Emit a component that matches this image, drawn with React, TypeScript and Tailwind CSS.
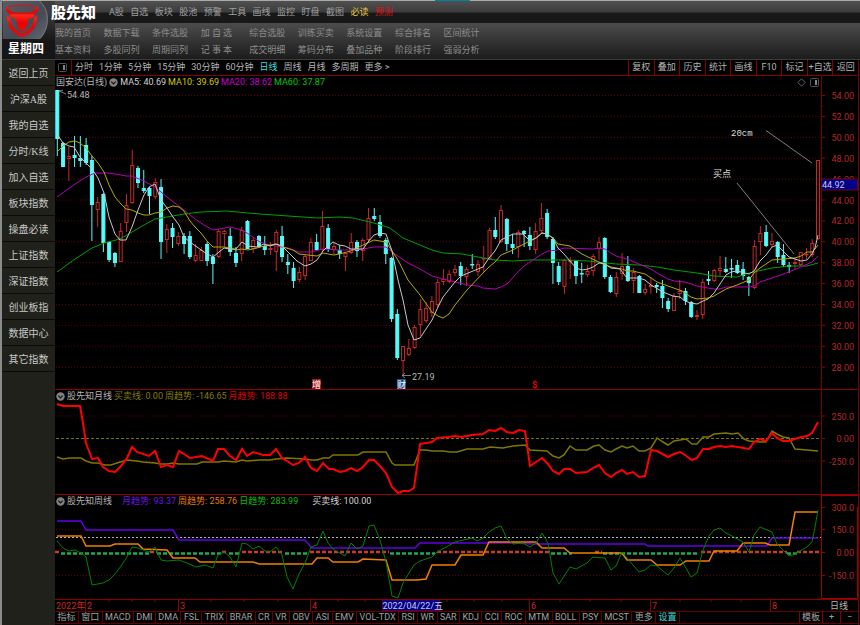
import { useState } from 'react';
import clsx from 'clsx';

type Candle = [high: number, top: number, bottom: number, low: number, up: 0 | 1];

interface Series {
  color: string;
  width: number;
  points: string;
}

interface Legend {
  text: string;
  className: string;
}

const TOP_MENU = ['A股', '自选', '板块', '股池', '预警', '工具', '画线', '监控', '盯盘', '截图', '必读', '预测'];

const SUB_MENU = [
  '我的首页', '数据下载', '条件选股', '加 自 选', '综合选股', '训练买卖', '系统设置', '综合排名', '区间统计',
  '基本资料', '多股同列', '周期同列', '记 事 本', '成交明细', '筹码分布', '叠加品种', '阶段排行', '强弱分析',
];

const SIDE_MENU = [
  '返回上页', '沪深A股', '我的自选', '分时/K线', '加入自选', '板块指数',
  '操盘必读', '上证指数', '深证指数', '创业板指', '数据中心', '其它指数',
];

const PERIODS = ['分时', '1分钟', '5分钟', '15分钟', '30分钟', '60分钟', '日线', '周线', '月线', '多周期', '更多 >'];

const TOOLS = ['复权', '叠加', '历史', '统计', '画线', 'F10', '标记', '+自选', '返回'];

const INDICATORS = [
  '指标', '窗口', 'MACD', 'DMI', 'DMA', 'FSL', 'TRIX', 'BRAR', 'CR', 'VR', 'OBV', 'ASI', 'EMV',
  'VOL-TDX', 'RSI', 'WR', 'SAR', 'KDJ', 'CCI', 'ROC', 'MTM', 'BOLL', 'PSY', 'MCST', '更多', '设置',
];

const CANDLES: Candle[] = [
  [90, 90, 139, 156, 0], [142, 143, 167, 167, 0], [147, 156, 159, 181, 1], [136, 155, 158, 167, 0],
  [136, 158, 161, 167, 0], [138, 145, 163, 165, 0], [156, 160, 205, 241, 0], [197, 202, 210, 227, 1],
  [193, 194, 243, 252, 0], [241, 242, 260, 262, 0], [252, 253, 263, 267, 0], [223, 231, 262, 262, 1],
  [194, 205, 223, 232, 1], [150, 165, 203, 204, 1], [166, 168, 183, 188, 0], [170, 188, 191, 193, 0],
  [187, 188, 196, 214, 0], [178, 182, 197, 199, 1], [179, 187, 242, 259, 0], [224, 229, 240, 253, 1],
  [223, 228, 237, 248, 0], [232, 236, 244, 246, 1], [233, 236, 244, 254, 0], [231, 236, 257, 259, 0],
  [244, 255, 261, 262, 1], [247, 250, 261, 261, 1], [242, 244, 261, 266, 0], [254, 257, 264, 284, 0],
  [229, 231, 257, 258, 1], [230, 231, 234, 247, 1], [228, 236, 252, 256, 0], [247, 253, 263, 267, 0],
  [227, 230, 254, 261, 1], [220, 221, 249, 249, 0], [237, 240, 249, 253, 1], [235, 236, 247, 248, 0],
  [236, 246, 250, 255, 0], [242, 248, 250, 255, 1], [230, 232, 252, 271, 1], [226, 236, 257, 262, 0],
  [254, 262, 265, 274, 0], [262, 268, 281, 288, 0], [267, 272, 280, 282, 1], [255, 256, 276, 280, 1],
  [238, 242, 261, 261, 1], [234, 242, 250, 251, 0], [211, 226, 250, 252, 1], [224, 228, 249, 252, 0],
  [243, 246, 250, 254, 1], [245, 250, 254, 259, 0], [252, 253, 257, 271, 1], [233, 242, 253, 254, 1],
  [240, 242, 251, 257, 0], [238, 240, 251, 261, 1], [208, 218, 240, 242, 1], [208, 216, 219, 221, 0],
  [215, 222, 236, 238, 0], [238, 240, 254, 264, 0], [257, 258, 319, 322, 0], [309, 314, 358, 360, 0],
  [346, 346, 361, 375, 1], [339, 348, 355, 356, 1], [325, 327, 348, 349, 1], [299, 309, 325, 336, 1],
  [302, 308, 321, 323, 1], [296, 301, 313, 317, 1], [279, 282, 305, 307, 1], [269, 279, 282, 285, 1],
  [270, 274, 282, 283, 1], [265, 269, 273, 276, 1], [262, 266, 276, 285, 0], [267, 269, 277, 286, 1],
  [254, 264, 265, 269, 0], [260, 264, 272, 276, 1], [246, 258, 259, 272, 1], [228, 230, 259, 260, 1],
  [217, 230, 237, 239, 0], [205, 210, 242, 243, 1], [218, 219, 244, 251, 0], [234, 244, 248, 254, 0],
  [230, 232, 247, 258, 1], [230, 231, 234, 247, 0], [227, 235, 246, 250, 0], [223, 231, 250, 254, 1],
  [203, 218, 231, 233, 1], [209, 213, 237, 239, 0], [237, 239, 263, 284, 0], [262, 266, 282, 285, 0],
  [259, 260, 287, 294, 1], [257, 260, 262, 279, 1], [261, 261, 276, 284, 0], [263, 273, 274, 283, 0],
  [265, 271, 275, 277, 1], [254, 256, 271, 276, 1], [237, 242, 249, 260, 1], [237, 238, 277, 279, 0],
  [275, 277, 292, 293, 0], [272, 277, 294, 297, 1], [253, 266, 274, 280, 1], [256, 266, 281, 282, 0],
  [268, 272, 281, 293, 1], [275, 276, 293, 293, 0], [284, 289, 293, 295, 1], [277, 285, 287, 294, 1],
  [283, 285, 287, 293, 0], [280, 286, 298, 308, 0], [298, 301, 309, 312, 0], [293, 296, 311, 311, 1],
  [280, 291, 294, 299, 1], [288, 291, 301, 305, 0], [301, 302, 317, 318, 0], [310, 315, 317, 320, 1],
  [279, 282, 315, 319, 1], [271, 279, 281, 285, 0], [269, 270, 281, 282, 1], [256, 268, 271, 276, 1],
  [257, 269, 272, 273, 0], [259, 268, 269, 278, 0], [260, 265, 273, 274, 0], [262, 269, 276, 280, 0],
  [276, 277, 283, 296, 0], [240, 246, 288, 289, 1], [226, 233, 242, 255, 1], [225, 232, 246, 247, 0],
  [233, 241, 245, 247, 1], [241, 242, 257, 263, 0], [244, 255, 265, 267, 0], [262, 265, 267, 273, 0],
  [257, 262, 264, 269, 1], [252, 252, 265, 266, 1], [248, 254, 255, 259, 1], [239, 243, 255, 257, 1],
  [160, 160, 239, 240, 1],
];

const MA_LINES: Series[] = [
  {
    color: '#00a000',
    width: 1,
    points:
      '57,272 75,259 92,248 104,243 120,239 132,232 144,225 155,219 167,217 184,214 201,212 227,211 248,213 260,214 317,218 340,217 353,218 374,223 390,228 403,238 420,245 432,250 443,253 462,254 478,257 495,260 513,261 530,260 567,260 588,261 616,264 639,265 657,267 674,270 697,273 714,276 737,277 749,273 772,268 789,266 807,266 818,263',
  },
  {
    color: '#b400b4',
    width: 1,
    points:
      '57,197 75,184 86,177 95,173 109,173 115,174 121,175 126,176 132,176 144,181 155,187 167,197 184,210 195,219 204,225 213,230 219,229 230,227 242,230 247,233 260,242 270,245 276,246 288,248 299,252 311,252 323,249 339,250 351,250 363,249 374,247 386,247 392,252 408,263 420,269 432,276 443,279 460,283 467,285 478,286 483,288 495,289 501,287 507,284 518,272 524,266 536,258 542,254 548,251 558,250 564,248 593,249 599,248 605,249 611,253 616,256 627,259 639,264 651,269 657,273 668,279 674,281 685,282 697,286 708,288 714,289 720,289 726,287 749,287 754,286 760,282 772,278 789,272 801,267 812,262 818,256',
  },
  {
    color: '#b4aa00',
    width: 1,
    points:
      '57,152 63,146 69,142 75,141 80,143 86,148 92,156 98,163 104,172 109,185 115,197 121,204 126,209 132,210 138,213 144,215 149,215 155,213 161,212 167,208 173,206 179,207 184,211 190,221 195,227 201,233 207,241 213,247 224,247 230,248 236,250 242,249 248,250 257,248 264,246 276,244 283,247 293,250 299,254 317,256 323,253 334,255 339,254 351,251 363,245 374,240 386,242 392,251 398,260 408,280 420,295 432,312 438,316 443,318 449,314 455,305 467,290 483,273 489,267 495,262 501,255 513,250 518,247 530,241 536,238 542,233 547,234 553,238 558,244 570,246 582,254 588,257 599,262 611,267 622,269 627,271 633,271 645,274 657,282 668,286 682,291 691,297 697,299 708,298 714,296 726,289 737,285 749,280 754,273 760,268 772,260 783,259 795,258 801,256 807,252 812,252 815,249 818,245',
  },
  {
    color: '#c8c8c8',
    width: 1,
    points:
      '57,134 63,143 69,146 74,147 80,157 92,169 98,178 104,193 109,217 115,234 120,240 126,240 132,227 138,210 144,195 149,187 155,184 161,200 167,208 173,217 179,225 184,237 190,242 197,247 204,252 213,257 219,252 224,248 230,249 236,249 242,242 248,246 257,247 264,244 270,246 276,244 282,246 288,252 297,261 305,266 311,264 317,260 323,251 327,247 333,242 339,245 345,246 351,249 363,249 368,242 374,235 380,233 386,234 392,251 398,280 403,300 408,325 414,340 420,338 432,320 438,307 443,297 455,282 461,276 473,271 483,267 489,258 495,251 501,240 507,237 513,234 523,234 530,241 536,238 542,233 547,234 553,238 558,248 564,254 570,261 576,268 582,270 588,269 593,267 599,263 605,264 611,268 620,269 627,278 639,278 645,280 651,285 663,292 673,296 680,297 685,301 691,303 697,304 703,301 708,299 714,293 726,275 731,272 737,271 749,274 754,271 760,261 766,255 772,247 777,245 783,251 789,257 795,259 801,261 807,260 812,254 815,248 818,235',
  },
];

const MONTH_LINES: Series[] = [
  {
    color: '#7d7800',
    width: 1.5,
    points:
      '57,457 63,459 70,458 81,458 86,461 92,463 98,463 105,465 111,465 117,463 127,460 137,461 143,462 155,463 161,464 167,464 173,463 179,464 197,464 202,462 218,462 224,461 236,462 242,460 247,461 259,460 270,460 276,459 287,458 305,459 312,460 317,460 323,458 329,458 333,455 358,455 363,452 386,452 392,463 395,465 414,465 420,450 426,450 432,451 443,451 450,452 457,452 467,449 483,449 490,447 503,448 513,446 525,445 530,450 547,451 553,456 559,458 564,455 570,446 576,450 587,450 594,446 599,445 605,450 611,452 616,449 622,446 627,448 633,446 639,451 645,451 651,448 657,438 663,442 668,445 674,441 680,440 686,439 692,444 697,444 703,437 709,437 714,434 726,433 732,434 738,433 744,439 749,441 760,442 766,442 772,431 777,434 783,437 789,438 795,449 807,450 818,451',
  },
  {
    color: '#ff0000',
    width: 2,
    points:
      '57,404 63,406 80,406 82,417 86,443 92,459 98,458 103,467 109,471 115,472 121,466 127,458 132,447 137,452 149,456 155,451 161,467 167,465 173,467 179,451 184,454 190,458 202,456 213,461 218,449 224,449 230,456 236,460 242,449 247,456 253,452 263,455 270,455 276,449 282,458 287,461 293,465 299,463 305,457 311,468 317,471 323,463 329,469 333,469 340,472 345,471 351,468 357,471 363,467 369,460 374,460 380,466 386,473 392,487 398,493 403,491 409,491 414,488 417,467 420,444 426,443 432,442 437,438 448,437 455,436 461,437 472,435 483,434 489,430 495,431 501,428 507,432 513,433 519,430 525,431 530,466 536,462 542,458 548,464 553,471 559,474 564,469 570,469 576,473 587,472 593,468 599,465 605,473 611,477 616,473 622,470 627,474 633,472 639,477 645,476 651,450 657,451 668,457 674,454 680,452 685,455 692,460 697,458 703,449 709,449 714,447 720,446 726,447 732,446 749,449 754,442 760,439 766,441 772,433 777,438 783,441 789,441 801,437 807,436 812,433 818,422',
  },
];

const WEEK_LINES: Series[] = [
  {
    color: '#6400e6',
    width: 1.5,
    points:
      '57,521 81,521 86,530 173,530 179,540 305,540 312,548 415,548 420,543 517,543 533,544 645,544 648,546 767,546 772,538 818,538',
  },
  {
    color: '#f08000',
    width: 1.5,
    points:
      '57,536 81,536 86,546 110,546 115,544 138,544 143,549 167,550 173,558 195,558 200,562 253,562 259,564 312,564 317,558 328,558 333,562 358,562 363,559 386,560 392,580 417,580 426,579 432,565 455,565 461,555 483,555 489,542 536,542 542,548 564,548 570,553 622,553 627,560 651,560 657,565 680,565 686,561 709,561 714,551 737,551 743,543 765,543 770,545 789,545 795,512 818,512',
  },
  {
    color: '#008200',
    width: 1,
    points:
      '57,541 63,548 69,551 75,550 81,553 86,557 92,585 103,583 109,580 115,574 121,566 127,557 132,547 138,548 149,552 155,547 161,560 167,561 179,560 187,563 196,567 205,565 213,568 218,555 224,552 230,557 236,567 242,543 247,544 253,549 259,546 265,551 270,552 276,547 282,555 287,577 293,589 299,574 305,563 311,547 317,545 323,531 328,543 333,549 345,556 351,543 357,549 363,546 369,526 374,525 380,540 386,562 392,596 398,598 403,583 409,573 414,565 420,561 432,557 437,552 448,546 455,542 472,538 477,541 483,538 489,532 495,528 501,526 507,539 513,544 523,543 530,547 536,543 542,533 548,543 553,573 559,584 570,567 576,569 587,563 593,557 605,558 611,570 616,566 622,552 627,558 633,565 639,572 645,570 651,565 657,566 668,575 674,568 680,558 686,568 691,577 697,573 703,550 709,536 714,530 720,528 726,533 732,536 743,542 749,552 754,535 760,527 772,532 777,544 789,556 795,554 807,547 812,542 815,527 818,510',
  },
];

// x ranges of the dashed zero line, long side in red and short side in green
const ZERO_RED = [[55, 59], [150, 157], [222, 228], [242, 284], [310, 389], [437, 549], [595, 602], [701, 787], [797, 820]];
const ZERO_GREEN = [[61, 150], [157, 221], [229, 240], [285, 309], [390, 435], [551, 572], [603, 699], [787, 797]];

const PRICES = Array.from({ length: 14 }, (_, i) => ({
  label: (54 - i * 2).toFixed(2),
  y: 95.5 + i * 20.9,
}));

const MONTHS = [
  { x: 86, label: '2' },
  { x: 179, label: '3' },
  { x: 311, label: '4' },
  { x: 530, label: '6' },
  { x: 651, label: '7' },
  { x: 771, label: '8' },
];

const MINOR_TICKS = [109, 132, 155, 211, 244, 278, 338, 365, 447, 474, 502, 560, 590, 621, 680, 711, 741];

const FONT = "font-['Roboto','Noto_Sans_CJK_SC',sans-serif]";

function Lines({ series }: { series: Series[] }) {
  return (
    <>
      {series.map((s) => (
        <polyline key={s.color} points={s.points} fill="none" stroke={s.color} strokeWidth={s.width} />
      ))}
    </>
  );
}

function GridLine({ y, stroke = '#640000', dash = '1 2' }: { y: number; stroke?: string; dash?: string }) {
  return <line x1="56" x2="821" y1={y} y2={y} stroke={stroke} strokeDasharray={dash} />;
}

function AxisLabel({ y, children }: { y: number; children: string }) {
  return (
    <>
      <line x1="821" x2="825" y1={y} y2={y} stroke="#960000" />
      <text x="854" y={y + 3.5} fill="#b42828" fontSize="9" textAnchor="end">
        {children}
      </text>
    </>
  );
}

function CollapseIcon() {
  return (
    <svg viewBox="0 0 9 9" className="h-[9px] w-[9px] shrink-0">
      <circle cx="4.5" cy="4.5" r="4.2" fill="#828282" />
      <path d="M2.3 3.6 4.5 5.8 6.7 3.6" fill="none" stroke="#141414" strokeWidth="1.2" />
    </svg>
  );
}

function PaneIcon() {
  return (
    <svg viewBox="0 0 9 9" className="h-[9px] w-[9px] shrink-0">
      <rect x="0.5" y="0.5" width="8" height="8" rx="1" fill="none" stroke="#505050" />
      <rect x="5" y="2" width="2" height="5" fill="#828282" />
    </svg>
  );
}

function BullLogo() {
  return (
    <svg viewBox="0 0 48 39" className="h-[39px] w-[48px]" role="img" aria-label="股先知">
      <defs>
        <linearGradient id="plate" x1="0" y1="0" x2="1" y2="1">
          <stop offset="0" stopColor="#5a5d64" />
          <stop offset="0.6" stopColor="#464a54" />
          <stop offset="1" stopColor="#646973" />
        </linearGradient>
        <linearGradient id="bull" x1="0" y1="0" x2="0" y2="1">
          <stop offset="0" stopColor="#ff2a1e" />
          <stop offset="0.5" stopColor="#f00000" />
          <stop offset="1" stopColor="#d21414" />
        </linearGradient>
      </defs>
      <path d="M0 0H38C44 6 46 12 46 19C46 27 43 34 38 39H0Z" fill="url(#plate)" />
      <path d="M38 0C44 6 46 12 46 19C46 27 43 34 38 39" fill="none" stroke="#84888f" strokeWidth="0.8" />
      <path d="M6 6.5C12 3.8 28 3.8 34 6.500" fill="none" stroke="#c81e1e" strokeWidth="1.300" />
      <path
        d="M4.500 4C2 9 5 14 11 15.500H29C35 14 38 9 35.500 4C35.300 8 32 10.500 27 11.800H13C8 10.500 4.700 8 4.500 4Z"
        fill="url(#bull)"
      />
      <path
        d="M9 13.500H31L33 15.500 28.500 18 26 18.500 25.500 24 22.500 31H17.500L14.500 24 14 18.500 11.500 18 7 15.500Z"
        fill="url(#bull)"
      />
      <path
        d="M4.500 14.500C4.500 24 8 32 20 37.500C32 32 35.500 24 35.500 14.500L32 17.500C31.500 24.500 29 29.500 20 33.800C11 29.500 8.500 24.500 8 17.500Z"
        fill="url(#bull)"
      />
    </svg>
  );
}

function PanelHeader({
  title,
  legends,
  iconFirst,
  active,
  icons,
}: {
  title: string;
  legends: Legend[];
  iconFirst?: boolean;
  active?: boolean;
  icons?: boolean;
}) {
  return (
    <div className="flex h-3 items-stretch leading-3">
      <div className="flex min-w-0 flex-1 items-center gap-[2px] overflow-hidden px-px whitespace-nowrap">
        {iconFirst && <CollapseIcon />}
        <h2 className="text-[#b4b4b4]">{title}</h2>
        {!iconFirst && <CollapseIcon />}
        {legends.map((l) => (
          <span key={l.text} className={l.className}>
            {l.text}
          </span>
        ))}
        {icons && (
          <div className="mr-px ml-auto flex items-center gap-1">
            <svg viewBox="0 0 9 9" className="h-[9px] w-[9px]">
              <path d="M4.500 0.800 8.200 4.500 4.500 8.200 0.800 4.500Z" fill="none" stroke="#646464" />
            </svg>
            <PaneIcon />
          </div>
        )}
      </div>
      <div
        className={clsx(
          'w-[37px] shrink-0 border-l',
          active ? 'border-t border-[#a00000]' : 'border-[#780000]',
        )}
      />
    </div>
  );
}

function PriceChart() {
  return (
    <svg viewBox="55 88 803 302" className="h-auto w-full" fontSize="9">
      {PRICES.map((p) => (
        <g key={p.label}>
          <GridLine y={p.y} />
          <AxisLabel y={p.y}>{p.label}</AxisLabel>
          <line x1="821" x2="823" y1={p.y + 10.5} y2={p.y + 10.5} stroke="#780000" />
        </g>
      ))}
      <line x1="821.5" x2="821.5" y1="88" y2="390" stroke="#780000" />
      <line x1="55" x2="858" y1="389.5" y2="389.5" stroke="#8c0000" />

      {CANDLES.map(([high, top, bottom, low, up], i) => {
        const x = 57.3 + i * 5.763;
        const color = up ? '#c82828' : '#54fcfc';
        return (
          <g key={i} stroke={color}>
            <line x1={x} x2={x} y1={high} y2={top} />
            <line x1={x} x2={x} y1={bottom} y2={low} />
            <rect
              x={x - 1.5}
              y={top + 0.5}
              width="3"
              height={Math.max(bottom - top - 1, 0.5)}
              fill={up ? '#000000' : color}
            />
          </g>
        );
      })}
      <Lines series={MA_LINES} />

      <g stroke="#a0a0a0" strokeWidth="0.8" fill="none">
        <path d="M59 91 66 94M59 91 63 90.500" />
        <path d="M402 375.500H411M405 373 402 375.500 405 378" />
        <path d="M766 130.500 812 163M737 183 794 254" />
      </g>
      <g fill="#b4b4b4">
        <text x="67" y="97.500">54.48</text>
        <text x="412" y="379.500">27.19</text>
      </g>
      <g fill="#dcdcdc">
        <text x="731" y="136" fontFamily="'Liberation Mono',monospace">20cm</text>
        <text x="713" y="177" fontFamily="'Noto Sans CJK SC',sans-serif">买点</text>
      </g>

      <rect x="312" y="379" width="9" height="10" fill="#a01414" />
      <text x="312" y="387.500" fill="#ffffff">增</text>
      <rect x="397" y="379" width="9" height="10" fill="#1e5096" />
      <text x="397" y="387.500" fill="#ffffff">财</text>
      <text x="532" y="388" fill="#f00000" fontWeight="700">$</text>

      <rect x="821.500" y="179" width="36" height="11" fill="#00008c" stroke="#780000" />
      <text x="822" y="187.500" fill="#c8c8dc">44.92</text>
    </svg>
  );
}

function MonthChart() {
  return (
    <svg viewBox="55 402 803 93" className="h-auto w-full">
      <GridLine y={416} />
      <GridLine y={438.5} stroke="#787800" dash="3 2" />
      <GridLine y={461} />
      <AxisLabel y={416}>250.0</AxisLabel>
      <AxisLabel y={438.5}>0.00</AxisLabel>
      <AxisLabel y={461}>-250.0</AxisLabel>
      <line x1="821.5" x2="821.5" y1="402" y2="495" stroke="#780000" />
      <line x1="55" x2="858" y1="494.5" y2="494.5" stroke="#8c0000" />
      <Lines series={MONTH_LINES} />
    </svg>
  );
}

function WeekChart() {
  return (
    <svg viewBox="55 507 803 93" className="h-auto w-full overflow-visible">
      <GridLine y={529.5} />
      <GridLine y={537.5} stroke="#b4b4b4" dash="2 2" />
      <GridLine y={575.5} />
      <AxisLabel y={507.5}>300.0</AxisLabel>
      <AxisLabel y={529.5}>150.0</AxisLabel>
      <AxisLabel y={552.5}>0.00</AxisLabel>
      <AxisLabel y={575.5}>-150.0</AxisLabel>
      {ZERO_RED.map(([a, b]) => (
        <line key={a} x1={a} x2={b} y1="552" y2="552" stroke="#c83c28" strokeWidth="2.500" strokeDasharray="4 2" />
      ))}
      {ZERO_GREEN.map(([a, b]) => (
        <line key={a} x1={a} x2={b} y1="553.500" y2="553.500" stroke="#1eaa5a" strokeWidth="2.500" strokeDasharray="4 2" />
      ))}
      <Lines series={WEEK_LINES} />
      <path d="M821.500 507V598.500H857.500V507" fill="none" stroke="#a00000" />
      <line x1="55" x2="858" y1="599.5" y2="599.5" stroke="#8c0000" />
    </svg>
  );
}

function DateAxis() {
  return (
    <svg viewBox="55 600 803 11" className="h-auto w-full" fontSize="9" fill="#c82828">
      {MINOR_TICKS.map((x) => (
        <line key={x} x1={x} x2={x} y1="600" y2="602" stroke="#8c0000" />
      ))}
      <text x="56" y="608.500">2022年</text>
      {MONTHS.map((m) => (
        <g key={m.x}>
          <line x1={m.x - 0.5} x2={m.x - 0.5} y1="600" y2="611" stroke="#8c0000" />
          <text x={m.x + 1} y="608.500">{m.label}</text>
        </g>
      ))}
      <rect x="382.500" y="600" width="57" height="10.500" fill="#00008c" stroke="#500050" />
      <text x="382.500" y="608.500" fill="#c8c8dc">2022/04/22/五</text>
      <text x="830" y="608.500" fill="#b4b4b4">日线</text>
    </svg>
  );
}

function Header() {
  return (
    <header className="flex h-[59px] border-b border-[#3c3c3c] bg-linear-to-b from-[#4b4b4b] from-40% to-[#1c1c1c]">
      <div className="flex w-[53px] shrink-0 flex-col bg-linear-to-b from-[#3c3c3c] from-20% to-[#161616] to-70%">
        <BullLogo />
        <div className="pl-[6px] text-[12px] leading-5 font-bold whitespace-nowrap text-white">星期四</div>
      </div>
      <div className="flex min-w-0 flex-1 flex-col">
        <div className="flex h-[22px] items-center bg-linear-to-b from-[#505050] from-0% via-[#3c3c3c] via-50% to-[#181818] to-55% pt-[2px]">
          <h1 className="w-[54px] shrink-0 -indent-1 text-[15px] leading-5 font-black whitespace-nowrap text-white">
            股先知
          </h1>
          <nav className="flex w-[284px] justify-between whitespace-nowrap">
            {TOP_MENU.map((item) => (
              <a
                key={item}
                href="#"
                className={clsx(
                  item === '必读' && 'text-[#e6c83c]',
                  item === '预测' && 'text-[#dc1414]',
                  item !== '必读' && item !== '预测' && 'text-[#a0a0a0]',
                )}
              >
                {item}
              </a>
            ))}
          </nav>
        </div>
        <nav className="grid w-[437px] grid-cols-9 whitespace-nowrap text-[#8c8c8c]">
          {SUB_MENU.map((item) => (
            <a key={item} href="#" className="h-[17px] leading-5">
              {item}
            </a>
          ))}
        </nav>
      </div>
    </header>
  );
}

function Sidebar() {
  return (
    <aside className="w-[53px] shrink-0 bg-[#20211b]">
      {SIDE_MENU.map((item) => (
        <button
          key={item}
          type="button"
          className="block h-[26px] w-full border-b border-[#0a0a08] pt-px text-center font-['Liberation_Serif','Noto_Sans_CJK_SC',serif] text-[10px] whitespace-nowrap text-[#c8c8c8]"
        >
          {item}
        </button>
      ))}
    </aside>
  );
}

function Toolbar({ period, onPeriod }: { period: string; onPeriod: (p: string) => void }) {
  return (
    <div className="flex h-4 items-stretch border-b border-[#820000] text-[#b4b4b4]">
      <div className="flex w-[17px] shrink-0 items-center border-r border-[#820000] pl-[3px]">
        <PaneIcon />
      </div>
      <div className="flex flex-1 items-center gap-[6px] pl-[3px] whitespace-nowrap">
        {PERIODS.map((p) => (
          <button
            key={p}
            type="button"
            onClick={() => onPeriod(p)}
            className={clsx(p === period && 'text-[#3cdcdc]')}
          >
            {p}
          </button>
        ))}
      </div>
      <div className="grid w-[230px] grid-cols-9">
        {TOOLS.map((t) => (
          <button key={t} type="button" className="border-l border-[#820000] whitespace-nowrap">
            {t}
          </button>
        ))}
      </div>
    </div>
  );
}

function IndicatorBar() {
  return (
    <div className="flex h-[13px] items-stretch border-y border-[#640000] leading-[11px] text-[#a0a0a0]">
      <div className="flex w-[625px] items-stretch">
        {INDICATORS.map((name) => (
          <button
            key={name}
            type="button"
            className={clsx(
              'grow border-r border-[#640000] px-[2px] whitespace-nowrap',
              name === '设置' && 'text-[#3cdcdc]',
            )}
          >
            {name}
          </button>
        ))}
      </div>
      <div className="ml-auto grid grid-cols-[23px_18px_18px]">
        {['模板', '+', '−'].map((name) => (
          <button key={name} type="button" className="border-l border-[#820000] whitespace-nowrap">
            {name}
          </button>
        ))}
      </div>
    </div>
  );
}

export default function App() {
  const [period, setPeriod] = useState('日线');

  return (
    <div className={clsx('flex min-h-screen flex-col border-l-2 border-[#8c8c8c] bg-black text-[9px]', FONT)}>
      <div className="flex h-px bg-[#aaaaaa]">
        <span className="ml-[50.5%] w-[35px] bg-[#0082a0]" />
      </div>
      <Header />
      <div className="flex flex-1">
        <Sidebar />
        <main className="mr-px min-w-0 flex-1 border-r border-[#780000]">
          <Toolbar period={period} onPeriod={setPeriod} />
          <section>
            <PanelHeader
              title="国安达(日线)"
              icons
              legends={[
                { text: 'MA5: 40.69', className: 'text-[#d2d2d2]' },
                { text: 'MA10: 39.69', className: 'text-[#d2c800]' },
                { text: 'MA20: 38.62', className: 'text-[#c800c8]' },
                { text: 'MA60: 37.87', className: 'text-[#00c800]' },
              ]}
            />
            <PriceChart />
          </section>
          <section>
            <PanelHeader
              title="股先知月线"
              iconFirst
              legends={[
                { text: '买卖线: 0.00', className: 'text-[#827d00]' },
                { text: '周趋势: -146.65', className: 'text-[#827d00]' },
                { text: '月趋势: 188.88', className: 'text-[#dc0000]' },
              ]}
            />
            <MonthChart />
          </section>
          <section>
            <PanelHeader
              title="股先知周线"
              iconFirst
              active
              legends={[
                { text: '月趋势: 93.37', className: 'ml-2 text-[#6e14e6]' },
                { text: '周趋势: 258.76', className: 'text-[#e67d00]' },
                { text: '日趋势: 283.99', className: 'text-[#00be00]' },
                { text: '买卖线: 100.00', className: 'ml-3 text-[#d2d2d2]' },
              ]}
            />
            <WeekChart />
          </section>
          <DateAxis />
          <IndicatorBar />
        </main>
      </div>
    </div>
  );
}
